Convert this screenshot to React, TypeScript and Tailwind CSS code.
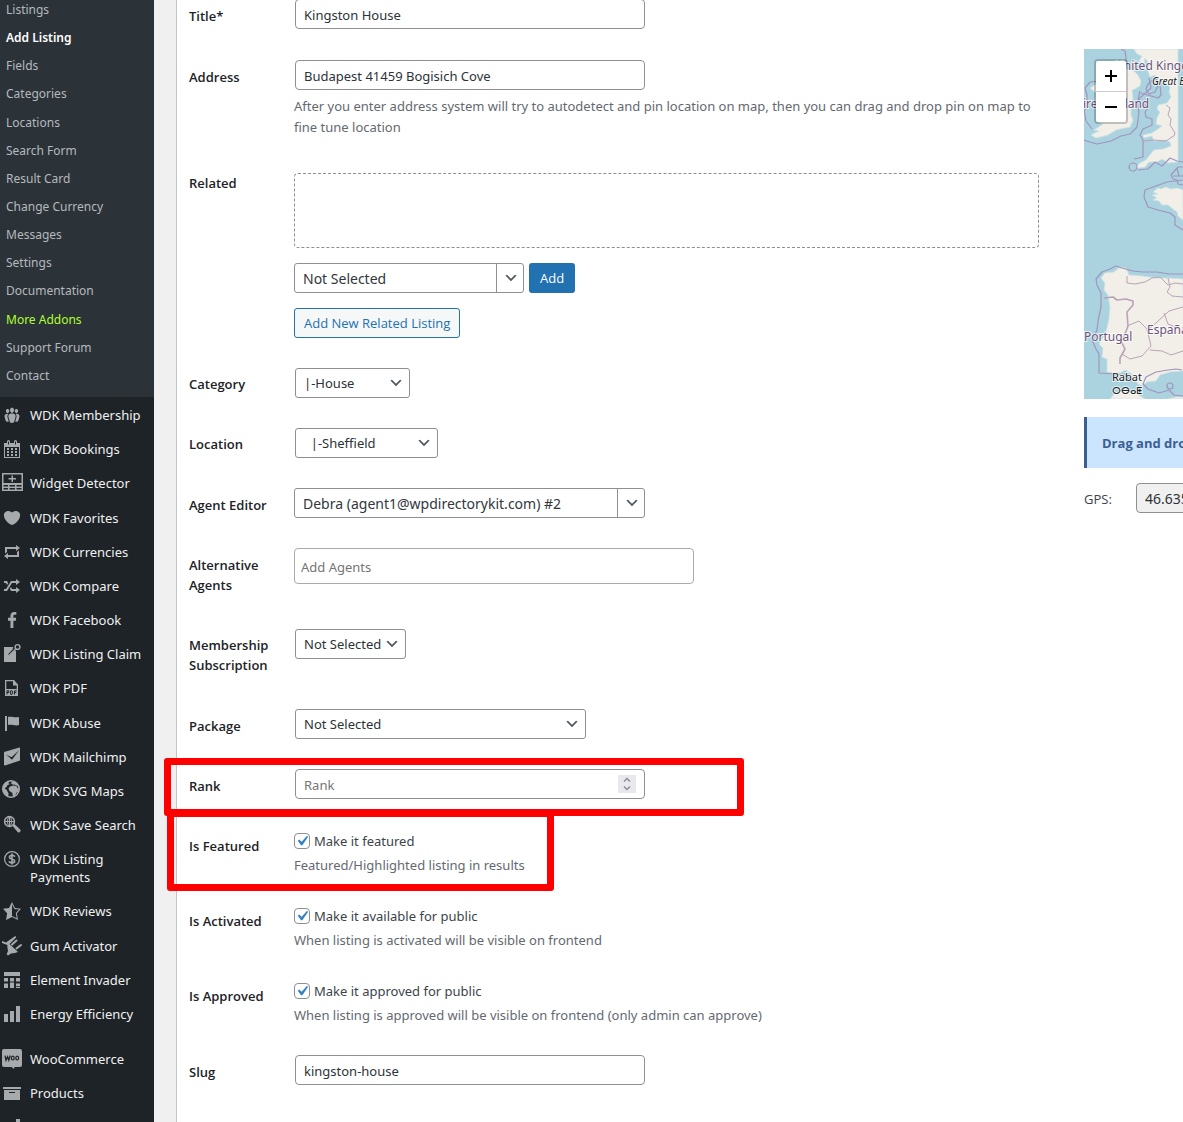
import React from 'react';
import clsx from 'clsx';

const submenu = [
  'Listings',
  'Add Listing',
  'Fields',
  'Categories',
  'Locations',
  'Search Form',
  'Result Card',
  'Change Currency',
  'Messages',
  'Settings',
  'Documentation',
  'More Addons',
  'Support Forum',
  'Contact',
];

const icons = {
  groups: (
    <path d="M8.03 4.46c-.29 1.28.55 3.46 1.97 3.46 1.41 0 2.25-2.18 1.96-3.46-.22-.98-1.08-1.63-1.96-1.63-.89 0-1.74.65-1.97 1.63zm-4.13.9c-.25 1.08.47 2.93 1.67 2.93s1.92-1.85 1.67-2.93c-.19-.83-.92-1.39-1.67-1.39s-1.48.56-1.67 1.39zm8.86 0c-.25 1.08.47 2.93 1.66 2.93 1.2 0 1.92-1.85 1.67-2.93-.19-.83-.92-1.39-1.67-1.39-.74 0-1.47.56-1.66 1.39zm-.59 11.43l1.25-4.3C14.2 10 12.71 8.47 10 8.47c-2.72 0-4.21 1.53-3.44 4.02l1.26 4.3C8.05 17.51 9 18 10 18c.98 0 1.94-.49 2.17-1.21zm-6.1-7.63c-.49.67-.96 1.83-.42 3.59l1.12 3.79c-.34.2-.77.31-1.2.31-.85 0-1.65-.41-1.85-1.03l-1.07-3.65c-.65-2.11.61-3.4 2.92-3.4.27 0 .54.02.79.06-.1.1-.2.22-.29.33zm8.35-.39c2.31 0 3.58 1.29 2.92 3.4l-1.07 3.65c-.2.62-1 1.03-1.85 1.03-.43 0-.86-.11-1.2-.31l1.11-3.77c.55-1.78.08-2.94-.42-3.61-.08-.11-.18-.23-.28-.33.25-.04.51-.06.79-.06z" />
  ),
  calendar: (
    <path
      fillRule="evenodd"
      d="M2 4h3V2.500a1.500 1.500 0 013 0V4h4V2.500a1.500 1.500 0 013 0V4h3v15H2V4zm1 4v10h14V8H3zm3-5.500V5.500h1V2.500H6zm7 0V5.500h1V2.500h-1zM5 9h2v2H5V9zm4 0h2v2H9V9zm4 0h2v2h-2V9zm-8 3h2v2H5v-2zm4 0h2v2H9v-2zm4 0h2v2h-2v-2zm-8 3h2v2H5v-2zm4 0h2v2H9v-2zm4 0h2v2h-2v-2z"
    />
  ),
  widget: (
    <path
      fillRule="evenodd"
      d="M0 0h21v18H0V0zm1.500 1.500V10h18V1.500h-18zm0 10.500v1.500H6V12H1.500zm6 0v1.500h5.500V12H7.500zm7 0v1.500h5V12h-5zm-13 3v1.500H6V15H1.500zm6 0v1.500h5.500V15H7.500zm7 0v1.500h5V15h-5zM9.500 2.500h1.500v2.500h3v1.500h-3V9H9.500V6.500h-3V5h3V2.500z"
    />
  ),
  heart: (
    <path d="M10 17.120c3.330-1.400 5.740-3.790 7.040-6.210 1.280-2.410 1.460-4.810.32-6.250-1.030-1.290-2.370-1.780-3.730-1.740s-2.680.63-3.630 1.460c-.95-.83-2.270-1.420-3.630-1.460s-2.700.45-3.730 1.740c-1.140 1.440-.96 3.840.34 6.250 1.280 2.420 3.690 4.810 7.020 6.210z" />
  ),
  repeat: <path d="M5 7v3l-2 1.500V5h11V3l4 3.010L14 9V7H5zm10 6v-3l2-1.500V15H6v2l-4-3.010L6 11v2h9z" />,
  shuffle: (
    <path d="M18 6.010L14 9V7h-4l-5 8H2v-2h2l5-8h5V3zM2 5h3l1.150 2.170-1.120 1.800L4 7H2V5zm16 9.010L14 17v-2H9l-1.150-2.170 1.120-1.800L10 13h4v-2z" />
  ),
  facebook: (
    <path d="M8.460 18h2.930v-7.300h2.450l.37-2.840h-2.820V6.040c0-.82.23-1.380 1.410-1.380h1.510V2.110c-.26-.03-1.150-.11-2.190-.11-2.180 0-3.660 1.330-3.660 3.760v2.100H6v2.840h2.460V18z" />
  ),
  claim: (
    <>
      <path d="M2 3h9.200l-.4 2.300-4.700 5 1.300 1.300 5.200-4.800H14V18H2z" />
      <path d="M7 11.500l7.200-7" stroke="currentColor" strokeWidth="1.400" />
      <circle cx="15.500" cy="3" r="2.400" fill="none" stroke="currentColor" strokeWidth="1.400" />
    </>
  ),
  pdf: (
    <>
      <path fillRule="evenodd" d="M3 2h9l4 4.500V18H3V2zm1.300 1.300V11h10.400V7.500H11V3.300H4.300z" />
      <path
        d="M5 16.500v-3.700h1.800v1.800H5M8.700 12.800v3.600h1.200l.7-.6v-2.400l-.7-.6zM12.500 16.500v-3.700h2.200M12.500 14.600h1.800"
        fill="none"
        stroke="#1d2327"
        strokeWidth="1"
      />
    </>
  ),
  flag: <path d="M5 18V3H3v15h2zm1-6V4c3-1 7 1 11 0v8c-3 1.270-8-1-11 0z" />,
  mail: (
    <path
      fillRule="evenodd"
      d="M2 5L17.500.5Q18 .5 18 1.200V13.500L3 18.500Q2 18.500 2 17.700V5zm2.500 2.800L10 12.800 17.200 2.900 9.600 10.200 4.500 7.800z"
    />
  ),
  globe: (
    <>
      <circle cx="9" cy="8" r="8.200" fill="none" stroke="currentColor" strokeWidth="1.600" />
      <path d="M1 4.500Q3 .5 7.500 0L6.300 2.200 8 3 5.300 4.300 4.600 6 2.500 7.200 4.500 8.800 6.500 12.200 6.300 16Q1.500 13.500 1 9z" />
      <path d="M8.500 5.300l3-.8 3 .8 1.500 2.200 1 .3-.5 3-2 1-1.700 3.400-1.800.3-.8-3.700L7.400 10l-.9-2.700z" />
      <path d="M9.500.5l3.500.5 3.200 3.200-1.700.6-2.300-1.300-1.200.3-1.800-1.300z" />
    </>
  ),
  search: (
    <>
      <circle cx="7.500" cy="6.500" r="4.900" fill="none" stroke="currentColor" strokeWidth="1.500" />
      <ellipse cx="7.500" cy="6.500" rx="2" ry="4.500" fill="none" stroke="currentColor" strokeWidth="1" />
      <path d="M3 6.500h9M7.500 2v9" stroke="currentColor" strokeWidth="1" />
      <path d="M11 11l1.500-1.500 5.500 5.200q.7 1-.2 2-1 .9-2 .1z" stroke="currentColor" strokeWidth=".8" />
    </>
  ),
  dollar: (
    <>
      <circle cx="10" cy="10" r="7.400" fill="none" stroke="currentColor" strokeWidth="1.200" />
      <path
        d="M12.700 7.800Q12.300 6.200 10 6.200T7.400 8.100Q7.500 9.500 10 10t2.700 2Q12.600 13.900 10 13.900T7.200 12.200M10 4.600v10.900"
        fill="none"
        stroke="currentColor"
        strokeWidth="1.600"
      />
    </>
  ),
  star: (
    <path
      fillRule="evenodd"
      d="M10 1L7 7l-6 .75 4.130 4.620L4 19l6-3 6 3-1.120-6.630L19 7.750 13 7zm0 2.240l2.340 4.690 4.650.58-3.180 3.560.87 5.150L10 14.880V3.240z"
    />
  ),
  plug: (
    <>
      <path d="M0 5l4 1.500L13.300 0l1 1.300L8.500 7 6 9.200 0 7z" />
      <path d="M7 7.500l9 8.500-3 1-4 .5-3 2-1.300-1.300L6 15 5.200 10z" />
      <path d="M10 8.500l4.500-4M14.500 12.500l4.500-3.500" stroke="currentColor" strokeWidth="2" strokeLinecap="round" />
    </>
  ),
  layout: (
    <path d="M2 2h16v4H2zM2 8h4v3.500H2zM8 8h4v3.500H8zM14 8h4v3.500h-4zM2 13.500h4v4.500H2zM8 12.500h4V18H8zM14 13.500h4v2.500h-4zM14 16.800h4V18h-4z" />
  ),
  bars: <path d="M18 18V2h-4v16h4zm-6 0V7H8v11h4zm-6 0v-8H2v8h4z" />,
  woo: (
    <>
      <path d="M2 0h16q2 0 2 2v14q0 2-2 2h-5.500l-.5 2-2.500-2H2q-2 0-2-2V2q0-2 2-2z" />
      <path d="M3 6.700l1 4.500 1.600-3.400 1.200 3.400L8.300 6.500" fill="none" stroke="#1d2327" strokeWidth="1.300" />
      <ellipse cx="10.800" cy="9.100" rx="1.400" ry="1.900" fill="none" stroke="#1d2327" strokeWidth="1.200" />
      <ellipse cx="15.200" cy="9.100" rx="1.400" ry="1.900" fill="none" stroke="#1d2327" strokeWidth="1.200" />
    </>
  ),
  archive: <path d="M19 4v2H1V4h18zM2 7h16v10H2V7zm11 3V9H7v1h6z" />,
};

type IconName = keyof typeof icons;

const menu: { label: string; icon: IconName }[] = [
  { label: 'WDK Membership', icon: 'groups' },
  { label: 'WDK Bookings', icon: 'calendar' },
  { label: 'Widget Detector', icon: 'widget' },
  { label: 'WDK Favorites', icon: 'heart' },
  { label: 'WDK Currencies', icon: 'repeat' },
  { label: 'WDK Compare', icon: 'shuffle' },
  { label: 'WDK Facebook', icon: 'facebook' },
  { label: 'WDK Listing Claim', icon: 'claim' },
  { label: 'WDK PDF', icon: 'pdf' },
  { label: 'WDK Abuse', icon: 'flag' },
  { label: 'WDK Mailchimp', icon: 'mail' },
  { label: 'WDK SVG Maps', icon: 'globe' },
  { label: 'WDK Save Search', icon: 'search' },
  { label: 'WDK Listing Payments', icon: 'dollar' },
  { label: 'WDK Reviews', icon: 'star' },
  { label: 'Gum Activator', icon: 'plug' },
  { label: 'Element Invader', icon: 'layout' },
  { label: 'Energy Efficiency', icon: 'bars' },
];

const shopMenu: { label?: string; icon: IconName }[] = [
  { label: 'WooCommerce', icon: 'woo' },
  { label: 'Products', icon: 'archive' },
  { icon: 'bars' },
];

const MenuItem: React.FC<{ label?: string; icon: IconName }> = ({ label, icon }) => (
  <li className="grow">
    <a href="#" className="flex gap-2 py-2 pl-0.5 text-[13px] leading-[18px] text-[#f0f0f1]">
      <svg viewBox="0 0 20 20" className="-my-px size-5 shrink-0 overflow-visible fill-current text-[#a7aaad]">
        {icons[icon]}
      </svg>
      {label && <span>{label}</span>}
    </a>
  </li>
);

const Sidebar: React.FC = () => (
  <nav className="w-[154px] shrink-0 bg-[#1d2327]">
    <div className="-mt-1 bg-[#2c3338] pb-[7px]">
      <ul className="flex h-[394px] flex-col">
        {submenu.map((item) => (
          <li key={item} className="flex flex-1 items-center">
            <a
              href="#"
              className={clsx(
                'pl-1.5 text-xs leading-5',
                item === 'Add Listing' && 'font-semibold text-white',
                item === 'More Addons' && 'text-[#adff2f]',
                item !== 'Add Listing' && item !== 'More Addons' && 'text-[#b4b9be]'
              )}
            >
              {item}
            </a>
          </li>
        ))}
      </ul>
    </div>
    <ul className="mt-px flex h-[633px] flex-col">
      {menu.map((item) => (
        <MenuItem key={item.label} {...item} />
      ))}
    </ul>
    <ul className="mt-[11px] flex flex-col">
      {shopMenu.map((item) => (
        <MenuItem key={item.icon} {...item} />
      ))}
    </ul>
  </nav>
);

const Chevron: React.FC = () => (
  <svg viewBox="0 0 20 20" className="size-4 fill-[#50575e]">
    <path d="M5 6l5 5 5-5 2 1-7 7-7-7 2-1z" />
  </svg>
);

interface RowProps {
  label: string;
  id: string;
  className?: string;
  children: React.ReactNode;
}

const Row: React.FC<RowProps> = ({ label, id, className, children }) => (
  <div className={clsx('relative flex', className)}>
    <div className="w-[105px] shrink-0 pt-[22px] pr-3">
      <label
        htmlFor={id}
        className="block font-['Open_Sans',sans-serif] text-[13px] leading-5 font-semibold text-[#1d2327]"
      >
        {label}
      </label>
    </div>
    <div className="min-w-0 flex-1 pt-[15px]">{children}</div>
  </div>
);

interface SelectProps {
  id: string;
  value: string;
  className: string;
}

const Select: React.FC<SelectProps> = ({ id, value, className }) => (
  <div className={clsx('relative ml-px', className)}>
    <select
      id={id}
      className="h-[30px] w-full appearance-none rounded-[3px] border border-[#8c8f94] bg-white pt-px pr-6 pl-2 text-[13px] text-[#2c3338]"
    >
      <option>{value}</option>
    </select>
    <span className="pointer-events-none absolute inset-y-0 right-1.5 flex items-center">
      <Chevron />
    </span>
  </div>
);

const Combo: React.FC<SelectProps> = ({ id, value, className }) => (
  <div className={clsx('relative', className)}>
    <select
      id={id}
      className="h-[30px] w-full appearance-none rounded-[3px] border border-[#8c8f94] bg-white pt-px pr-8 pl-2 text-sm text-[#32373c]"
    >
      <option>{value}</option>
    </select>
    <span className="pointer-events-none absolute inset-y-0 right-0 flex w-7 items-center justify-center border-l border-[#8c8f94]">
      <Chevron />
    </span>
  </div>
);

const TextInput: React.FC<{ id: string; value: string }> = ({ id, value }) => (
  <input
    id={id}
    type="text"
    defaultValue={value}
    className="ml-px block h-[30px] w-[350px] rounded border border-[#8c8f94] bg-white px-2 pt-px text-[13px] text-[#2c3338]"
  />
);

const CheckField: React.FC<{ id: string; text: string; hint: string }> = ({ id, text, hint }) => (
  <div className="pt-0.5">
    <div className="flex h-5 items-center gap-1">
      <span className="relative size-4">
        <input
          id={id}
          type="checkbox"
          defaultChecked
          className="peer block size-4 appearance-none rounded border border-[#8c8f94] bg-white"
        />
        <svg
          viewBox="0 0 20 20"
          className="pointer-events-none absolute -top-0.5 -left-0.5 hidden size-5 fill-[#3582c4] peer-checked:block"
        >
          <path d="M14.830 4.890l1.340.94-5.810 8.380H9.020L5.780 9.670l1.340-1.250 2.570 2.400z" />
        </svg>
      </span>
      <label htmlFor={id} className="pt-px text-[13px] text-[#3c434a]">
        {text}
      </label>
    </div>
    <p className="mt-1 text-[13px] leading-5 text-[#646970]">{hint}</p>
  </div>
);

const ListingForm: React.FC = () => (
  <form className="-mt-4 min-w-0 flex-1" onSubmit={(e) => e.preventDefault()}>
    <Row label="Title*" id="title" className="min-h-[61px]">
      <TextInput id="title" value="Kingston House" />
    </Row>
    <Row label="Address" id="address" className="min-h-[106px]">
      <TextInput id="address" value="Budapest 41459 Bogisich Cove" />
      <p className="mt-1.5 text-[13px] leading-[21px] text-[#646970]">
        After you enter address system will try to autodetect and pin location on map, then you can drag and drop pin
        on map to fine tune location
      </p>
    </Row>
    <Row label="Related" id="related" className="min-h-[201px]">
      <div className="mt-[7px] h-[75px] rounded border border-dashed border-[#8c8f94]" />
      <div className="mt-[15px] flex gap-[5px]">
        <Combo id="related" value="Not Selected" className="w-[230px]" />
        <button className="h-[30px] rounded-[3px] bg-[#2271b1] px-[11px] pt-px font-['Open_Sans',sans-serif] text-[13px] text-white">
          Add
        </button>
      </div>
      <button className="mt-[15px] block h-[30px] rounded-[3px] border border-[#2271b1] bg-[#f6f7f7] px-[9px] pt-px font-['Open_Sans',sans-serif] text-[13px] text-[#2271b1]">
        Add New Related Listing
      </button>
    </Row>
    <Row label="Category" id="category" className="min-h-[60px]">
      <Select id="category" value="|-House" className="mt-px w-[115px]" />
    </Row>
    <Row label="Location" id="location" className="min-h-[61px]">
      <Select id="location" value={'\u00a0\u00a0|-Sheffield'} className="mt-px w-[143px]" />
    </Row>
    <Row label="Agent Editor" id="agent" className="min-h-[60px]">
      <Combo id="agent" value="Debra (agent1@wpdirectorykit.com) #2" className="w-[351px]" />
    </Row>
    <Row label="Alternative Agents" id="agents" className="min-h-20">
      <input
        id="agents"
        type="text"
        placeholder="Add Agents"
        className="block h-9 w-[400px] rounded border border-[#aaaaaa] bg-white px-1.5 pt-0.5 text-[13px] placeholder-[#757575]"
      />
    </Row>
    <Row label="Membership Subscription" id="membership" className="min-h-[81px]">
      <Select id="membership" value="Not Selected" className="mt-px w-[111px]" />
    </Row>
    <Row label="Package" id="package" className="min-h-[60px]">
      <Select id="package" value="Not Selected" className="w-[291px]" />
    </Row>
    <Row label="Rank" id="rank" className="min-h-[60px]">
      <div className="relative ml-px w-[350px]">
        <input
          id="rank"
          type="number"
          placeholder="Rank"
          className="block h-[30px] w-full appearance-none rounded border border-[#8c8f94] bg-white pt-px pr-8 pl-2 text-[13px] placeholder-[#757575]"
        />
        <span className="pointer-events-none absolute top-[6px] right-[9px] flex h-[18px] w-[18px] items-center justify-center bg-[#e9e9ed]">
          <svg viewBox="0 0 18 18" className="size-[18px] fill-none stroke-[#8f8f9d]" strokeWidth="1.500">
            <path d="M6 6.500l3-3 3 3M6 11.500l3 3 3-3" />
          </svg>
        </span>
      </div>
      <div className="pointer-events-none absolute top-1 -left-[25px] z-10 h-[58px] w-[580px] rounded-[3px] border-[7px] border-[#ff0000]" />
    </Row>
    <Row label="Is Featured" id="featured" className="min-h-[75px]">
      <CheckField id="featured" text="Make it featured" hint="Featured/Highlighted listing in results" />
      <div className="pointer-events-none absolute -top-1 -left-[22px] z-10 h-[81px] w-[387px] rounded-[3px] border-[7px] border-[#ff0000]" />
    </Row>
    <Row label="Is Activated" id="activated" className="min-h-[75px]">
      <CheckField
        id="activated"
        text="Make it available for public"
        hint="When listing is activated will be visible on frontend"
      />
    </Row>
    <Row label="Is Approved" id="approved" className="min-h-[76px]">
      <CheckField
        id="approved"
        text="Make it approved for public"
        hint="When listing is approved will be visible on frontend (only admin can approve)"
      />
    </Row>
    <Row label="Slug" id="slug" className="min-h-[60px]">
      <TextInput id="slug" value="kingston-house" />
    </Row>
  </form>
);

const MapView: React.FC = () => (
  <div className="relative h-[350px] overflow-hidden bg-[#aad3df]">
    <svg width="99" height="350" viewBox="0 0 99 350">
      <g fill="#f2efe9" stroke="#cfe2e2" strokeWidth=".8" strokeLinejoin="round">
        {/* Ireland */}
        <path d="M6 39l8-5 8 1 3-4 4-8 9-4 6 2 6 1 4 4 3 6-1 5-5 3-3 1 1 8-2 9 0 8 2 5-3 7-5 1-9 2-8 5-12 3-5-3 8-4-5-1 9-6-6-2 7-5 7-3-5-3-7 1 2-5-1-5-5-3 6-2z" />
        {/* Great Britain */}
        <path d="M50 0l3 5 5 2-3 5 5 4 1-7 4 6-1 7 2 6 5-2 3 4 6 2 6 6-1 5 2 5-4 6-9 2-1 4 3 3-3 6-1 6 6 2-4 3-6 4-9 2 1 3 8-2 2 5 10-1 6 2 1 4-8 3-9 1-5 6-3 4-6 3-4 4 3 1 6-1 4-5 8 0 5-3 6 4 10-1V0z" />
        {/* Brittany */}
        <path d="M99 141l-6-2-6 1-5-2-5 2-3-1-5 4 5 2-6 1 5 3-4 2 6 1 3 4 6 0 5 4 4 3 1 4 5 4z" />
        {/* Iberia */}
        <path d="M99 230l-14-1-13 0-14-2-13-1-3-7-6-1-6 5-9 1-4 5 4 5-1 7 4 5 2 12-1 12-3 13-7 12 4 4-1 9 5 2 0 13 13 1 5-3 7 4 6 10 4 2 5-4 9-1 4-6 10-3 14-1z" />
        {/* Morocco */}
        <path d="M26 350l5-6 7-2 8 0 7 3 8 5zM84 350l8-2 7 0v2z" />
      </g>
      <g fill="none" stroke="#a194bd" strokeWidth="1.200" strokeLinejoin="round">
        <path d="M37 0l4 2 1 7 0 12M15 32l-9 1-5 6 2 7 0 12-3 4M0 60l2 12 6 8M0 91l6 2 7 2 14-3 10-5 9-2 7-7 2-15-2-9 4-6 10-9-2-10M57 44l10 3 7 2 3-3-1-10-5-7M62 40l2-5 6-5 4 7-3 6-6 2zM56 42l-2 9M60 55l4 4-3 4 1 5 6 2 0 6-9 4-3 6 3 5 0 17-9 2" />
        <path d="M54 121l10-1 7-7 7 4 8-8 7 3 6 1" />
        <circle cx="49" cy="118" r="4" />
        <path d="M99 118h-5l-7 8 2 4 4 1 1 4 5 1M89 127l10 0M93 119l2 8" />
        <path d="M99 131l-16 2-11 4-11 4-1 7 4 10 10 3 12 3 5 4 0 8 8 5" />
        <path d="M99 225l-14 0-12-2-14 0-10-1-11-3-6-2-6 3-8 3-6 7 1 6 4 8 0 14-3 14-1 9-5 10 4 9 3 5 0 19 14 1 12 1 6 6" />
        <path d="M99 347l-9-1-5-5-10 3-11-4-5-5 3-7 10-5 12-2 8-1 6 1" />
        <circle cx="86" cy="337" r="3" />
      </g>
      <g fill="none" stroke="#b9a3b8" strokeWidth="1" strokeLinejoin="round">
        <path d="M20 249l9-1 4 3 9-1 7 2 0 4-6 7 1 14-3 8-4 7 4 8-5 9 0 6" strokeWidth="1.600" />
        <path d="M43 227l0 7 8 1 10-2 7-4 8-1M76 228l8 8 7-2 8 1M84 229l2 9-3 5 5 4 11 1M99 258l-14 4-12 11-9 8M80 264l4 11 10 4 5 4M43 277l12-5 8 8 4 17-9 10-12 3-8-5M66 301l12 1 9 4 12-4" />
        <path d="M59 92l12-1 9 1 4-1 2-2 4-2 1-3-5-8 1-6-3-4 2-7-4-3" />
      </g>
      <g
        fontFamily="'Noto Sans', sans-serif"
        fill="#6d5478"
        stroke="#ffffff"
        strokeOpacity=".7"
        strokeWidth="2"
        paintOrder="stroke"
        fontSize="12"
      >
        <text x="31" y="21">United Kingdom</text>
        <text x="-1" y="59">ire</text>
        <text x="25" y="59">Ireland</text>
        <text x="0" y="292">Portugal</text>
        <text x="63" y="285">España</text>
        <g fill="#222222">
          <text x="68" y="36" fontSize="10" fontStyle="italic">Great Britain</text>
          <text x="28" y="332" fontSize="11">Rabat</text>
          <text x="28" y="345" fontSize="10">ⵔⴱⴰⵟ</text>
        </g>
      </g>
    </svg>
    <div className="absolute top-2.5 left-2.5 flex w-[34px] flex-col rounded border-2 border-black/20 bg-clip-padding">
      <button
        aria-label="Zoom in"
        className="flex h-[31px] items-center justify-center rounded-t-[2px] border-b border-[#cccccc] bg-white"
      >
        <svg viewBox="0 0 12 12" className="size-3 stroke-black" strokeWidth="2">
          <path d="M0 6h12M6 0v12" />
        </svg>
      </button>
      <button aria-label="Zoom out" className="flex h-[30px] items-center justify-center rounded-b-[2px] bg-white">
        <svg viewBox="0 0 12 12" className="size-3 stroke-black" strokeWidth="2">
          <path d="M0 6h12" />
        </svg>
      </button>
    </div>
  </div>
);

const MapPanel: React.FC = () => (
  <aside className="w-[99px] shrink-0 overflow-hidden pt-[49px]">
    <MapView />
    <p className="mt-[18px] flex h-[51px] items-center border-l-3 border-[#3b5f92] bg-[#cce5ff] pt-0.5 pl-[15px] font-['Open_Sans',sans-serif] text-[13px] font-bold whitespace-nowrap text-[#3b5f92]">
      Drag and drop pin to desired location
    </p>
    <div className="mt-[15px] flex items-center">
      <label htmlFor="gps" className="w-[52px] shrink-0 pt-1 font-['Open_Sans',sans-serif] text-[13px] text-[#3c434a]">
        GPS:
      </label>
      <input
        id="gps"
        type="text"
        readOnly
        defaultValue="46.6350"
        className="h-[30px] w-40 shrink-0 rounded border border-[#8c8f94] bg-[#f0f0f1] px-2 pt-px text-sm text-[#2c3338]"
      />
    </div>
  </aside>
);

const App: React.FC = () => {
  return (
    <div className="flex h-screen overflow-hidden bg-[#f0f0f1] font-['Noto_Sans','Open_Sans',sans-serif]">
      <Sidebar />
      <main className="ml-[22px] flex min-w-0 flex-1 gap-[45px] border-l border-[#c3c4c7] bg-white pl-3">
        <ListingForm />
        <MapPanel />
      </main>
    </div>
  );
};

export default App;
